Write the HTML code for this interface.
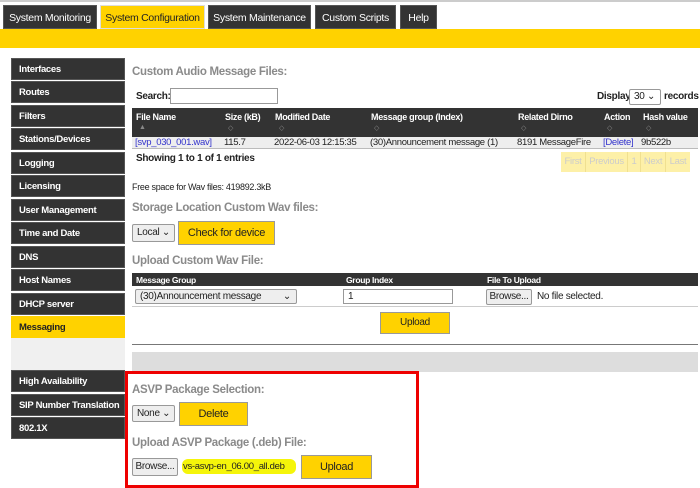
<!DOCTYPE html>
<html><head><style>
*{box-sizing:border-box;margin:0;padding:0;white-space:nowrap}
body{width:700px;height:488px;background:#fff;font-family:"Liberation Sans",sans-serif;font-size:10px;color:#222;position:relative;overflow:hidden;letter-spacing:-0.3px}
.a{position:absolute}
.tab{position:absolute;top:5px;height:24px;background:#333;color:#fff;font-size:10.5px;line-height:24px;text-align:center;border:1px solid #555;overflow:hidden}
.side{position:absolute;left:11px;width:114px;height:22px;background:#333;color:#fff;font-weight:bold;font-size:9.5px;line-height:22px;padding-left:7px;border:1px solid #555}
.h{position:absolute;color:#8a8a8a;font-weight:bold;font-size:11.5px}
.btn{position:absolute;background:#ffd200;border:1px solid #999;text-align:center;font-size:11px;color:#222}
.gbtn{position:absolute;background:#eee;border:1px solid #999;border-radius:2px;font-size:10px;text-align:center}
.th{position:absolute;color:#fff;font-weight:bold;font-size:9px}
.arr{position:absolute;color:#888;font-size:7px}
</style></head><body>
<div class="a" style="left:0;top:0;width:700px;height:2px;background:#ccc"></div>
<div class="tab" style="left:3px;width:94px">System Monitoring</div>
<div class="tab" style="left:100px;width:105px;background:#ffd200;color:#222;border-color:#ddd">System Configuration</div>
<div class="tab" style="left:208px;width:103px">System Maintenance</div>
<div class="tab" style="left:315px;width:81px">Custom Scripts</div>
<div class="tab" style="left:400px;width:37px">Help</div>
<div class="a" style="left:0;top:29px;width:700px;height:19px;background:#ffd200"></div>

<div class="side" style="top:58px">Interfaces</div>
<div class="side" style="top:81px">Routes</div>
<div class="side" style="top:105px">Filters</div>
<div class="side" style="top:128px">Stations/Devices</div>
<div class="side" style="top:152px">Logging</div>
<div class="side" style="top:175px">Licensing</div>
<div class="side" style="top:199px">User Management</div>
<div class="side" style="top:222px">Time and Date</div>
<div class="side" style="top:246px">DNS</div>
<div class="side" style="top:269px">Host Names</div>
<div class="side" style="top:293px">DHCP server</div>
<div class="side" style="top:316px;background:#ffd200;color:#222;border-color:#ffd200">Messaging</div>
<div class="a" style="left:11px;top:338px;width:114px;height:32px;background:#f0f0f0"></div>
<div class="side" style="top:370px">High Availability</div>
<div class="side" style="top:394px">SIP Number Translation</div>
<div class="side" style="top:417px">802.1X</div>

<div class="h" style="left:132px;top:66px">Custom Audio Message Files:</div>
<div class="a" style="left:136px;top:91px;font-weight:bold">Search:</div>
<div class="a" style="left:170px;top:88px;width:108px;height:16px;border:1px solid #999"></div>
<div class="a" style="left:597px;top:91px;font-weight:bold">Display</div>
<div class="gbtn" style="left:629px;top:89px;width:32px;height:16px;background:#fff;text-align:left;padding-left:4px;line-height:14px">30 &#8964;</div>
<div class="a" style="left:664px;top:91px;font-weight:bold">records</div>
<div class="a" style="left:132px;top:108px;width:566px;height:29px;background:#333"></div>
<div class="th" style="left:136px;top:112px">File Name</div><div class="arr" style="left:139px;top:124px">▲</div>
<div class="th" style="left:225px;top:112px">Size (kB)</div><div class="arr" style="left:228px;top:124px">◇</div>
<div class="th" style="left:275px;top:112px">Modified Date</div><div class="arr" style="left:279px;top:124px">◇</div>
<div class="th" style="left:371px;top:112px">Message group (Index)</div><div class="arr" style="left:374px;top:124px">◇</div>
<div class="th" style="left:518px;top:112px">Related Dirno</div><div class="arr" style="left:521px;top:124px">◇</div>
<div class="th" style="left:604px;top:112px">Action</div><div class="arr" style="left:607px;top:124px">◇</div>
<div class="th" style="left:643px;top:112px">Hash value</div><div class="arr" style="left:646px;top:124px">◇</div>
<div class="a" style="left:132px;top:137px;width:566px;height:12px;background:#eee;border-bottom:1px solid #bbb"></div>
<div class="a" style="left:135px;top:137px;font-size:9.5px;color:#33c">[svp_030_001.wav]</div>
<div class="a" style="left:224px;top:137px;font-size:9.5px">115.7</div>
<div class="a" style="left:274px;top:137px;font-size:9.5px">2022-06-03 12:15:35</div>
<div class="a" style="left:370px;top:137px;font-size:9.5px">(30)Announcement message (1)</div>
<div class="a" style="left:517px;top:137px;font-size:9.5px">8191 MessageFire</div>
<div class="a" style="left:603px;top:137px;font-size:9.5px;color:#33c">[Delete]</div>
<div class="a" style="left:641px;top:137px;font-size:9.5px">9b522b</div>
<div class="a" style="left:136px;top:153px;font-weight:bold">Showing 1 to 1 of 1 entries</div>
<div class="a" style="left:561px;top:152px;width:129px;height:20px;background:#fdf0a8;color:#ccc;font-size:9.5px;line-height:20px;display:flex">
<span style="width:25px;text-align:center;border-right:1px solid #f0e090">First</span><span style="width:42px;text-align:center;border-right:1px solid #f0e090">Previous</span><span style="width:13px;text-align:center;border-right:1px solid #f0e090">1</span><span style="width:25px;text-align:center;border-right:1px solid #f0e090">Next</span><span style="width:24px;text-align:center">Last</span></div>
<div class="a" style="left:132px;top:182px;font-size:9px">Free space for Wav files: 419892.3kB</div>
<div class="h" style="left:132px;top:202px">Storage Location Custom Wav files:</div>
<div class="gbtn" style="left:132px;top:224px;width:43px;height:18px;text-align:left;padding-left:4px;line-height:16px">Local &#8964;</div>
<div class="btn" style="left:178px;top:221px;width:97px;height:24px;line-height:22px">Check for device</div>
<div class="h" style="left:132px;top:255px">Upload Custom Wav File:</div>
<div class="a" style="left:132px;top:273px;width:566px;height:13px;background:#333"></div>
<div class="th" style="left:136px;top:275px;font-size:8.5px">Message Group</div>
<div class="th" style="left:346px;top:275px;font-size:8.5px">Group Index</div>
<div class="th" style="left:487px;top:275px;font-size:8.5px">File To Upload</div>
<div class="a" style="left:132px;top:306px;width:566px;height:1px;background:#ccc"></div>
<div class="gbtn" style="left:135px;top:289px;width:162px;height:15px;text-align:left;padding-left:4px;line-height:13px">(30)Announcement message<span style="position:absolute;right:5px">&#8964;</span></div>
<div class="a" style="left:343px;top:289px;width:110px;height:15px;border:1px solid #999;padding-left:4px;line-height:13px">1</div>
<div class="gbtn" style="left:486px;top:289px;width:46px;height:16px;line-height:14px">Browse...</div>
<div class="a" style="left:537px;top:291px">No file selected.</div>
<div class="btn" style="left:380px;top:312px;width:70px;height:22px;line-height:20px;font-size:10px">Upload</div>
<div class="a" style="left:132px;top:344px;width:566px;height:1px;background:#777"></div>
<div class="a" style="left:132px;top:352px;width:566px;height:20px;background:#ddd"></div>
<div class="a" style="left:125px;top:371px;width:294px;height:117px;border:3px solid #e00"></div>
<div class="h" style="left:132px;top:384px">ASVP Package Selection:</div>
<div class="gbtn" style="left:132px;top:405px;width:43px;height:17px;text-align:left;padding-left:4px;line-height:15px">None &#8964;</div>
<div class="btn" style="left:179px;top:402px;width:69px;height:24px;line-height:22px">Delete</div>
<div class="h" style="left:132px;top:437px">Upload ASVP Package (.deb) File:</div>
<div class="gbtn" style="left:132px;top:458px;width:46px;height:18px;line-height:16px">Browse...</div>
<div class="a" style="left:182px;top:459px;width:114px;height:15px;background:#f5f50a;border-radius:6px;line-height:15px;padding-left:1px;font-size:9.5px;overflow:hidden">vs-asvp-en_06.00_all.deb</div>
<div class="btn" style="left:301px;top:455px;width:71px;height:24px;line-height:22px">Upload</div>
</body></html>
